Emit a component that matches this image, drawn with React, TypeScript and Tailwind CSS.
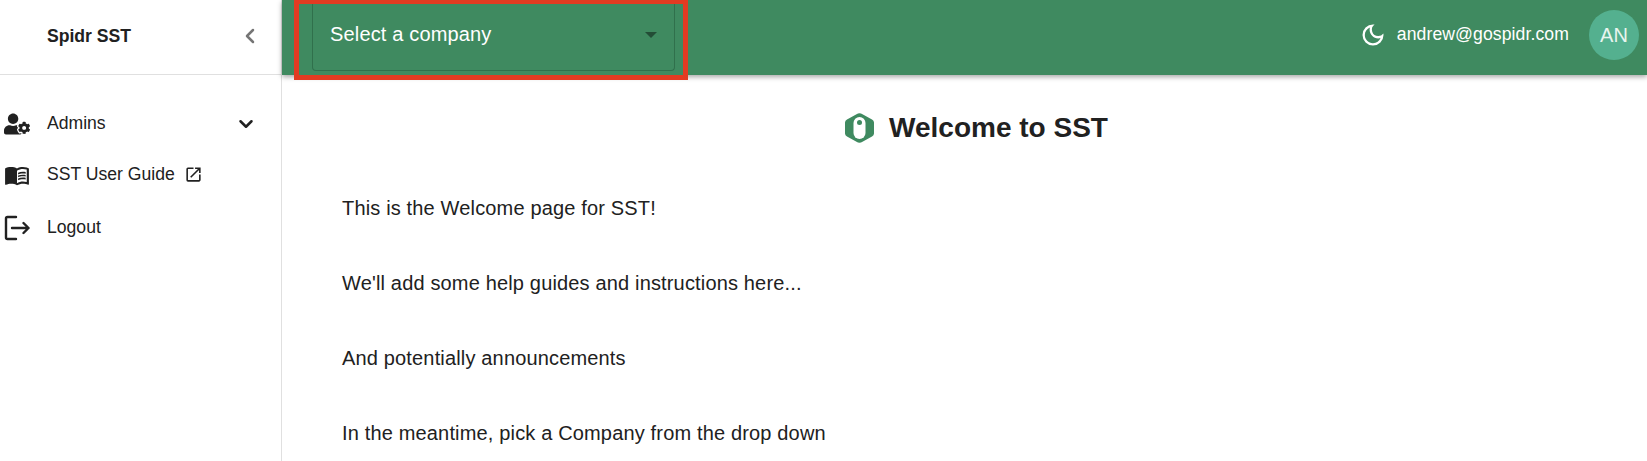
import { ChevronDown, ChevronLeft } from 'lucide-react';
import { FaUserCog } from 'react-icons/fa';
import { MdMenuBook, MdOpenInNew, MdOutlineDarkMode } from 'react-icons/md';

const font = { fontFamily: '"Liberation Sans", Arial, sans-serif' };

const LogoutIcon = () => (
  <svg width="26" height="26" viewBox="0 0 26 26" fill="none" stroke="#212121" strokeWidth="2.4" strokeLinecap="round" strokeLinejoin="round">
    <path d="M12 2H3.500a1.500 1.500 0 0 0-1.500 1.500v19A1.500 1.500 0 0 0 3.500 24H12" />
    <path d="M8 13h16.500M19.500 8l5 5-5 5" />
  </svg>
);

const HexLogo = () => (
  <svg width="31" height="30" viewBox="0 0 31 30">
    <path d="M12.500 1.200a6 6 0 0 1 6 0l9.500 5.300a3.500 3.500 0 0 1 2 3.100v10.800a3.500 3.500 0 0 1-2 3.100l-9.500 5.300a6 6 0 0 1-6 0L3 23.500a3.500 3.500 0 0 1-2-3.100V9.600a3.500 3.500 0 0 1 2-3.100z" fill="#3f8a60" />
    <rect x="9.500" y="4" width="12" height="22" rx="6" fill="#fff" />
    <circle cx="15.500" cy="9.500" r="2.500" fill="#3f8a60" />
  </svg>
);

export default function App() {
  return (
    <div className="relative flex h-[461px] w-[1647px] overflow-hidden bg-white text-[#212121]" style={font}>
      <aside className="flex w-[282px] shrink-0 flex-col border-r border-[#e0e0e0]">
        <div className="flex h-[75px] items-center justify-between border-b border-[#e0e0e0] pb-[2px] pl-[47px] pr-[19px]">
          <span className="text-[17.6px] font-bold">Spidr SST</span>
          <ChevronLeft size={24} strokeWidth={2.5} className="text-[#757575]" />
        </div>
        <nav className="flex flex-col pt-[23px]">
          <div className="flex h-[51px] items-center pl-[4px] pr-[24px]">
            <FaUserCog size={26} className="w-[26px] shrink-0" />
            <span className="ml-[17px] flex-1 text-[17.6px]">Admins</span>
            <ChevronDown size={22} strokeWidth={2.75} />
          </div>
          <div className="flex h-[51px] items-center pl-[4px]">
            <MdMenuBook size={28} className="w-[26px] shrink-0" />
            <span className="ml-[17px] text-[17.6px]">SST User Guide</span>
            <MdOpenInNew size={19} className="ml-[9px]" />
          </div>
          <div className="mt-[2px] flex h-[51px] items-center pl-[4px]">
            <LogoutIcon />
            <span className="ml-[17px] text-[17.6px]">Logout</span>
          </div>
        </nav>
      </aside>
      <div className="flex min-w-0 flex-1 flex-col">
        <header className="z-10 flex h-[75px] shrink-0 items-center justify-between bg-[#3f8a60] pl-[30px] pr-[8px] shadow-[0_2px_5px_rgba(0,0,0,0.35)]">
          <div className="flex h-[70px] w-[363px] -translate-y-[2px] items-center justify-between rounded-b-[4px] border border-t-0 border-[#30704c] pl-[17px] pr-[17px]">
            <span className="-translate-y-[1px] text-[20px] tracking-[0.16px] text-white">Select a company</span>
            <span className="h-0 w-0 border-x-[6px] border-t-[6px] border-x-transparent border-t-[#234d36]" />
          </div>
          <div className="flex -translate-y-[3px] items-center text-white">
            <MdOutlineDarkMode size={28} />
            <span className="ml-[10px] text-[17.6px] tracking-[0.1px]">andrew@gospidr.com</span>
            <span className="ml-[20px] flex h-[50px] w-[50px] items-center justify-center rounded-full bg-[#54b08f] text-[20px] text-[#e8f5ef]">AN</span>
          </div>
        </header>
        <main className="flex-1 pl-[23px] pt-[32px]">
          <div className="flex items-center justify-center gap-[14px]">
            <HexLogo />
            <h1 className="text-[28px] font-bold">Welcome to SST</h1>
          </div>
          <div className="mt-[47px] flex flex-col gap-[51px] pl-[37px] text-[20px] leading-[24px] tracking-[0.16px]">
            <p>This is the Welcome page for SST!</p>
            <p>We'll add some help guides and instructions here...</p>
            <p>And potentially announcements</p>
            <p>In the meantime, pick a Company from the drop down</p>
          </div>
        </main>
      </div>
      <div className="pointer-events-none absolute left-[294px] top-[-1px] z-20 h-[81px] w-[394px] border-[5px] border-[#e23b22]" />
    </div>
  );
}
